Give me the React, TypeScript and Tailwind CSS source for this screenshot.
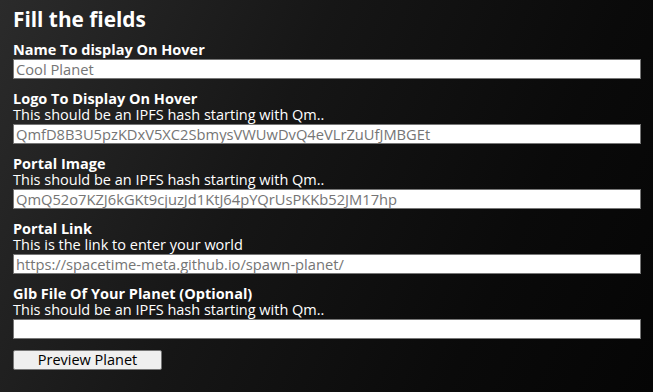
import React from "react";

const font = { fontFamily: '"Open Sans", "Noto Sans", sans-serif' };

function Field({ label, desc, placeholder }: { label: string; desc?: string; placeholder: string }) {
  return (
    <div className="flex flex-col">
      <label className="text-[14.5px] leading-[16px] font-bold text-white">{label}</label>
      {desc && <div className="text-[14.5px] leading-[16px] text-white">{desc}</div>}
      <input
        className="mt-[1px] h-[20px] w-full border border-[#767676] bg-white px-[2px] text-[14.7px] text-black outline-none placeholder:text-[#757575]"
        placeholder={placeholder}
        style={font}
      />
    </div>
  );
}

export default function App() {
  return (
    <div
      className="min-h-screen w-full bg-[linear-gradient(115deg,#2b2b2b_0%,#161616_40%,#0a0a0a_75%,#050505_100%)] pl-[13px] pr-[12px] pt-[7px]"
      style={font}
    >
      <h2 className="text-[20.8px] leading-[24px] font-bold text-white">Fill the fields</h2>
      <div className="mt-[11px] flex flex-col gap-[12px]">
        <Field label="Name To display On Hover" placeholder="Cool Planet" />
        <Field
          label="Logo To Display On Hover"
          desc="This should be an IPFS hash starting with Qm.."
          placeholder="QmfD8B3U5pzKDxV5XC2SbmysVWUwDvQ4eVLrZuUfJMBGEt"
        />
        <Field
          label="Portal Image"
          desc="This should be an IPFS hash starting with Qm.."
          placeholder="QmQ52o7KZJ6kGKt9cjuzJd1KtJ64pYQrUsPKKb52JM17hp"
        />
        <Field
          label="Portal Link"
          desc="This is the link to enter your world"
          placeholder="https://spacetime-meta.github.io/spawn-planet/"
        />
        <Field
          label="Glb File Of Your Planet (Optional)"
          desc="This should be an IPFS hash starting with Qm.."
          placeholder=""
        />
      </div>
      <button className="mt-[11px] h-[20px] w-[149px] rounded-[2px] border border-[#767676] bg-[#efefef] text-[14.5px] leading-[18px] text-black">
        Preview Planet
      </button>
    </div>
  );
}
